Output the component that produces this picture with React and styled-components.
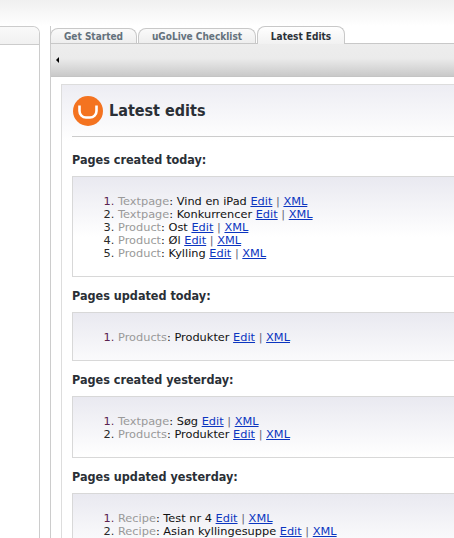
import React from "react";
import styled, { createGlobalStyle } from "styled-components";

const Global = createGlobalStyle`
  html, body { margin: 0; padding: 0; height: 100%; overflow: hidden; background: #fff; }
  body { font-family: "DejaVu Sans", Verdana, sans-serif; font-size: 12px; color: #222; }
`;
const Page = styled.div`
  height: 538px; overflow: hidden;
  background: linear-gradient(#f0f0f0 0, #ffffff 26px) no-repeat;
  padding-top: 26px; box-sizing: border-box;
  display: flex; gap: 10px;
`;
const Side = styled.aside`
  width: 40px; height: 540px; flex: none; box-sizing: border-box;
  background: #fff; border: 1px solid #ccc; border-left: 0;
  border-radius: 0 7px 0 0;
`;
const SideHead = styled.div`
  height: 17px; border-bottom: 1px solid #ccc;
  background: linear-gradient(#f9f9f9, #f1f1f1); border-radius: 0 7px 0 0;
`;
const Main = styled.main`
  flex: 1; min-width: 0; display: flex; flex-direction: column;
  border-left: 1px solid #ccc;
`;
const Tabs = styled.nav`
  height: 17px; display: flex; align-items: flex-end;
  margin-left: -1px; border-bottom: 1px solid #c8c8c8;
`;
const Tab = styled.div`
  box-sizing: border-box; height: ${p => (p.$active ? 18 : 15)}px;
  width: ${p => p.$w}px; flex: none; margin-bottom: ${p => (p.$active ? -1 : 0)}px;
  margin-right: 1px; text-align: center;
  font: bold 10px/14px "DejaVu Sans Condensed", "DejaVu Sans", sans-serif;
  color: ${p => (p.$active ? "#2b3138" : "#64717c")};
  background: ${p => (p.$active ? "linear-gradient(#fff,#f1f1f1)" : "linear-gradient(#fafafa,#eeeeee)")};
  border: 1px solid #c8c8c8; border-bottom: 0; border-radius: 8px 8px 0 0;
  padding-top: ${p => (p.$active ? 3 : 1)}px;
`;
const Bar = styled.div`
  height: 32px; display: flex; align-items: center; padding-left: 5px;
  background: linear-gradient(#ededed 0, #ebebeb 45%, #c9c9c9 100%);
  border-bottom: 1px solid #c4c4c4; flex: none;
`;
const Arrow = styled.span`
  width: 0; height: 0; border: 3px solid transparent; border-right: 3px solid #000; border-left: 0;
`;
const Content = styled.div`
  padding: 7px 0 0 10px; flex: 1;
`;
const Panel = styled.section`
  border: 1px solid #ddd; border-right: 0; border-bottom: 0;
  background: linear-gradient(#ededf3 0, #ffffff 56px) no-repeat;
  padding: 0 0 0 10px;
`;
const Title = styled.header`
  height: 50px; padding: 1px 0 0 1px; display: flex; align-items: center; gap: 6px;
  border-bottom: 1px solid #ccc;
`;
const H2 = styled.h2`
  margin: 0; font: bold 16px/20px "DejaVu Sans Condensed", "DejaVu Sans", sans-serif; color: #2a2f36;
`;
const H3 = styled.h3`
  margin: 0; height: 17px; padding-top: ${p => (p.$first ? 14 : 10)}px; padding-bottom: 8px;
  font: bold 12.5px/17px "DejaVu Sans Condensed", "DejaVu Sans", sans-serif; color: #2a2f36;
`;
const Box = styled.ol`
  margin: 0; padding: 18px 0 16px 45px; list-style: decimal;
  border: 1px solid #d8d8d8; border-right: 0;
  background: linear-gradient(#e9e9f0 0, #ffffff 60px) no-repeat #fff;
  line-height: 13px; font-size: 11.35px; color: #111;
  & li::marker { color: #2a2a2a; }
  & li:first-child::marker { color: #5a2350; }
`;
const Type = styled.span` color: #999; `;
const Link = styled.a` color: #0b35c0; text-decoration: underline; `;
const Sep = styled.span` color: #667; `;

const Logo = () => (
  <svg width="30" height="30" viewBox="0 0 30 30" style={{ flex: "none" }}>
    <circle cx="15" cy="15" r="15" fill="#f47320" />
    <path d="M6.5 9.5 V15 a6.5 6.5 0 0 0 6.5 6.5 h4 a6.5 6.5 0 0 0 6.5 -6.5 V9.5" fill="none" stroke="#fff" strokeWidth="2.6" />
  </svg>
);

const Item = ({ type, name }) => (
  <li>
    <Type>{type}</Type>: {name} <Link href="#">Edit</Link> <Sep>|</Sep> <Link href="#">XML</Link>
  </li>
);

const sections = [
  { title: "Pages created today:", items: [["Textpage", "Vind en iPad"], ["Textpage", "Konkurrencer"], ["Product", "Ost"], ["Product", "Øl"], ["Product", "Kylling"]] },
  { title: "Pages updated today:", items: [["Products", "Produkter"]] },
  { title: "Pages created yesterday:", items: [["Textpage", "Søg"], ["Products", "Produkter"]] },
  { title: "Pages updated yesterday:", items: [["Recipe", "Test nr 4"], ["Recipe", "Asian kyllingesuppe"]] },
];

export default function App() {
  return (
    <>
      <Global />
      <Page>
        <Side><SideHead /></Side>
        <Main>
          <Tabs>
            <Tab $w={87}>Get Started</Tab>
            <Tab $w={118}>uGoLive Checklist</Tab>
            <Tab $w={88} $active>Latest Edits</Tab>
          </Tabs>
          <Bar><Arrow /></Bar>
          <Content>
            <Panel>
              <Title><Logo /><H2>Latest edits</H2></Title>
              {sections.map((s, i) => (
                <div key={s.title}>
                  <H3 $first={i === 0}>{s.title}</H3>
                  <Box>{s.items.map(([t, n], j) => <Item key={j} type={t} name={n} />)}</Box>
                </div>
              ))}
            </Panel>
          </Content>
        </Main>
      </Page>
    </>
  );
}
